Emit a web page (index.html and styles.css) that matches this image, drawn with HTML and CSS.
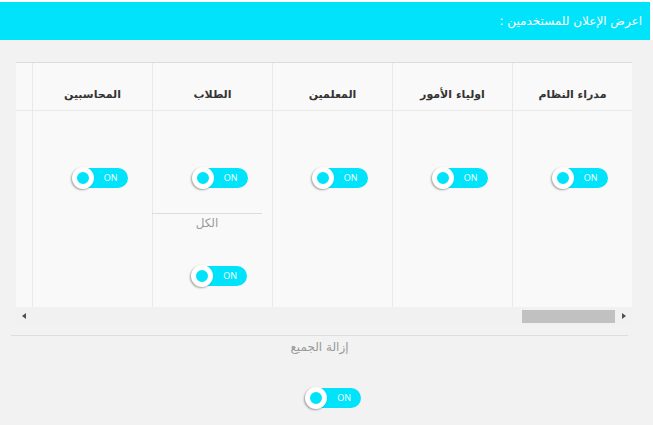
FILE: index.html
```html
<!DOCTYPE html>
<html lang="ar" dir="rtl">
<head>
<meta charset="utf-8">
<title>اعرض الإعلان</title>
<link rel="stylesheet" href="styles.css">
</head>
<body>
<header class="topbar">
  <div class="topbar-inner">
    <h1 class="title">اعرض الإعلان للمستخدمين :</h1>
  </div>
</header>
<main class="main">
  <div class="table-wrap">
    <div class="table-scroll">
      <div class="grid">
        <div class="row head">
          <div class="cell th">مدراء النظام</div>
          <div class="cell th">اولياء الأمور</div>
          <div class="cell th">المعلمين</div>
          <div class="cell th">الطلاب</div>
          <div class="cell th">المحاسبين</div>
          <div class="cell th"></div>
        </div>
        <div class="row body">
          <div class="cell td">
            <div class="toggle-row"><span class="toggle"><span class="knob"></span><span class="track">ON</span></span></div>
          </div>
          <div class="cell td">
            <div class="toggle-row"><span class="toggle"><span class="knob"></span><span class="track">ON</span></span></div>
          </div>
          <div class="cell td">
            <div class="toggle-row"><span class="toggle"><span class="knob"></span><span class="track">ON</span></span></div>
          </div>
          <div class="cell td">
            <div class="toggle-row"><span class="toggle"><span class="knob"></span><span class="track">ON</span></span></div>
            <div class="group group-cell">
              <div class="group-label">الكل</div>
              <div class="toggle-row toggle-row-group"><span class="toggle"><span class="knob"></span><span class="track">ON</span></span></div>
            </div>
          </div>
          <div class="cell td">
            <div class="toggle-row"><span class="toggle"><span class="knob"></span><span class="track">ON</span></span></div>
          </div>
          <div class="cell td"></div>
        </div>
      </div>
    </div>
    <div class="scrollbar">
      <span class="arrow arrow-left"></span>
      <span class="thumb"></span>
      <span class="arrow arrow-right"></span>
    </div>
  </div>
  <div class="group group-all">
    <div class="group-label">إزالة الجميع</div>
    <div class="toggle-row toggle-row-all"><span class="toggle"><span class="knob"></span><span class="track">ON</span></span></div>
  </div>
</main>
</body>
</html>
```
FILE: styles.css
```css
* { box-sizing: border-box; }
html, body { margin: 0; padding: 0; }
body {
  background: #f2f2f2;
  font-family: "DejaVu Sans", "Noto Sans", sans-serif;
  width: 653px;
  height: 425px;
  overflow: hidden;
}
.topbar {
  background: #ffffff;
  padding: 2px 3px 0 0;
}
.topbar-inner {
  background: #00e3fa;
  height: 38px;
  display: flex;
  align-items: center;
  padding: 0 8px 0 0;
}
.title {
  margin: 0;
  font-size: 12px;
  font-weight: normal;
  color: #ffffff;
  line-height: 16px;
}
.main {
  padding-top: 22px;
}
.table-wrap {
  margin: 0 21px 0 16px;
}
.table-scroll {
  overflow: hidden;
  background: #f9f9f9;
}
.grid {
  width: 720px;
}
.row {
  display: grid;
  grid-template-columns: repeat(6, 120px);
}
.head {
  border-top: 1px solid #dcdcdc;
  border-bottom: 1px solid #e9e9e9;
}
.cell {
  border-left: 1px solid #e9e9e9;
}
.th {
  height: 47px;
  padding-top: 24px;
  text-align: center;
  font-size: 11px;
  font-weight: bold;
  color: #333333;
  line-height: 16px;
}
.td {
  padding: 56px 0 20px 0;
}
.toggle-row {
  display: flex;
  justify-content: center;
  padding-left: 14px;
}
.toggle-row-group { padding-left: 24px; margin-top: 33px; }
.toggle-row-all { padding-left: 27px; margin-top: 31px; }
.toggle {
  position: relative;
  display: inline-flex;
  width: 56px;
  height: 22px;
  direction: ltr;
  align-items: center;
}
.track {
  margin-left: 4px;
  width: 52px;
  height: 20px;
  border-radius: 10px;
  background: #00e3fa;
  color: #ffffff;
  font-family: "Open Sans", "Liberation Sans", sans-serif;
  font-size: 9px;
  line-height: 20px;
  text-align: right;
  padding-right: 10px;
}
.knob {
  position: absolute;
  left: 0;
  top: 0;
  width: 22px;
  height: 22px;
  border-radius: 50%;
  background: #00e3fa;
  border: 5px solid #ffffff;
  box-shadow: -1px 1px 2px rgba(0, 0, 0, 0.35);
}
.group {
  border-top: 1px solid #dddddd;
}
.group-cell {
  margin-top: 24px;
  width: 110px;
  margin-right: 10px;
  margin-left: 0;
}
.group-label {
  text-align: center;
  font-size: 12px;
  line-height: 18px;
  color: #999999;
}
.group-all {
  margin-top: 10px;
  margin-left: 11px;
  margin-right: 25px;
}
.group-all .group-label {
  padding-top: 2px;
}
.scrollbar {
  direction: ltr;
  display: flex;
  align-items: center;
  height: 18px;
  background: #f1f1f1;
  padding: 0 6px;
}
.arrow {
  width: 0;
  height: 0;
  border-top: 3px solid transparent;
  border-bottom: 3px solid transparent;
}
.arrow-left { border-right: 4px solid #505050; }
.arrow-right { border-left: 4px solid #505050; }
.thumb {
  margin-left: auto;
  margin-right: 7px;
  width: 93px;
  height: 13px;
  background: #c1c1c1;
}
```
